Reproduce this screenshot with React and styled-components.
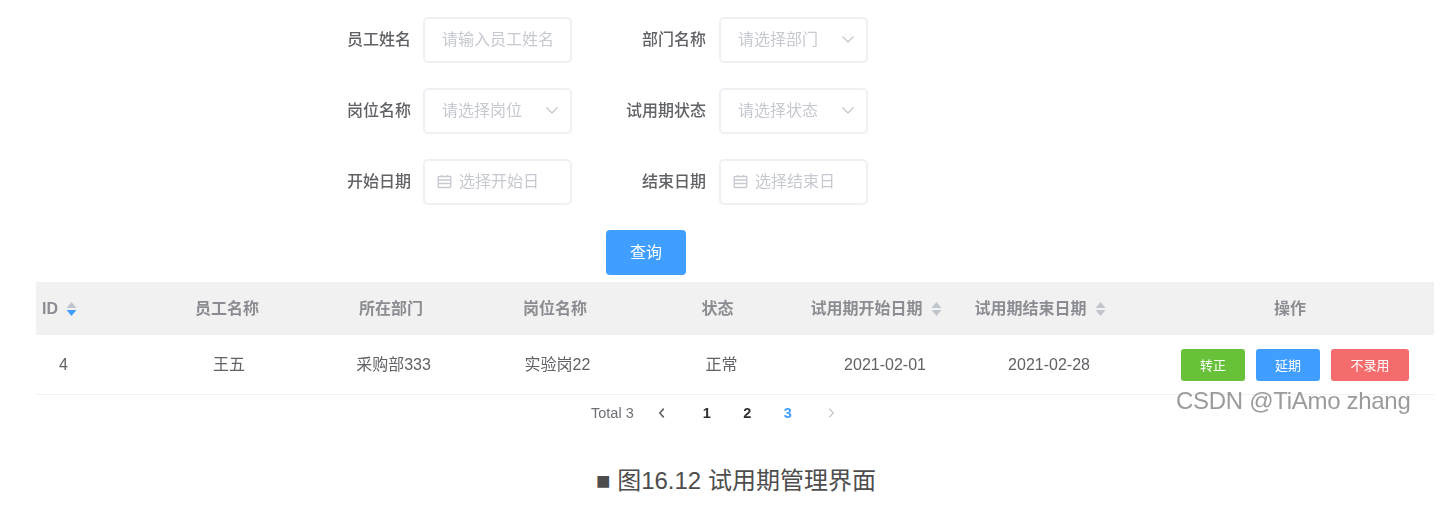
import React from "react";
import styled, { createGlobalStyle } from "styled-components";

const FONT = '"Liberation Sans", "Noto Sans CJK SC", sans-serif';

const Global = createGlobalStyle`
  html, body { margin: 0; padding: 0; background: #fff; }
  body { font-family: ${FONT}; }
`;
const Page = styled.div`
  position: relative;
  width: 1445px;
  height: 507px;
  overflow: hidden;
  background: #fff;
`;
const Soft = styled.div`
  filter: blur(0.6px);
`;
const Form = styled.div`
  display: grid;
  grid-template-columns: 423px 149px 147px 149px;
  grid-auto-rows: 46px;
  row-gap: 25px;
  padding-top: 17px;
`;
const Label = styled.div`
  display: flex;
  align-items: center;
  justify-content: flex-end;
  padding-right: ${(p) => (p.$second ? "13px" : "12px")};
  font-size: 16px;
  line-height: 22px;
  font-weight: 500;
  color: #606266;
`;
const Field = styled.div`
  box-sizing: border-box;
  display: flex;
  align-items: center;
  padding: 0 10px 0 ${(p) => (p.$date ? "12px" : "17px")};
  width: 149px;
  border: 2px solid #eef0f4;
  border-radius: 5px;
  font-size: 16px;
  line-height: 22px;
  color: #c6c9d0;
  gap: 7px;
  white-space: nowrap;
  svg {
    margin-bottom: 2px;
  }
`;
const FieldText = styled.span`
  flex: 1;
`;
const ButtonRow = styled.div`
  padding: 25px 0 0 606px;
`;
const QueryButton = styled.button`
  display: block;
  width: 80px;
  height: 45px;
  padding: 0 0 3px;
  border: none;
  border-radius: 4px;
  background: #409eff;
  color: #fff;
  font: 16px ${FONT};
`;
const Table = styled.div`
  margin: 7px 11px 0 36px;
`;
const Row = styled.div`
  display: grid;
  grid-template-columns: 109px 164px 164px 164px 163px 164px 164px 1fr;
  align-items: center;
  height: ${(p) => (p.$head ? "53px" : "60px")};
  box-sizing: border-box;
  background: ${(p) => (p.$head ? "#f1f1f1" : "#fff")};
  border-bottom: ${(p) => (p.$head ? "none" : "1px solid #f0f2f6")};
  color: ${(p) => (p.$head ? "#8b8d92" : "#606266")};
  font-size: 16px;
  font-weight: ${(p) => (p.$head ? 700 : 400)};
`;
const Cell = styled.div`
  display: flex;
  align-items: center;
  justify-content: ${(p) => (p.$left ? "flex-start" : "center")};
  padding-left: ${(p) => p.$pad || 0}px;
  padding-right: ${(p) => p.$padEnd || 0}px;
  gap: 8px;
  line-height: 22px;
  white-space: nowrap;
`;
const Actions = styled.div`
  display: flex;
  justify-content: flex-end;
  gap: 11px;
  padding-right: 25px;
`;
const ActionButton = styled.button`
  width: ${(p) => p.$w}px;
  height: 32px;
  padding: 0;
  border: none;
  border-radius: 3px;
  background: ${(p) => p.$bg};
  color: #fff;
  font: 13px ${FONT};
`;
const Pager = styled.div`
  display: flex;
  align-items: center;
  height: 36px;
  padding-left: 591px;
  font-size: 14.5px;
  color: #6e7075;
`;
const PagerTotal = styled.span`
  width: 44px;
  margin-right: 7px;
`;
const PagerButton = styled.span`
  display: flex;
  width: 40.5px;
  margin-left: ${(p) => p.$gap || 0}px;
  justify-content: center;
  align-items: center;
  font-weight: 700;
  color: ${(p) => p.$color || "#303133"};
`;
const Caption = styled.div`
  padding: 33px 0 0 596px;
  font-size: 24px;
  line-height: 34px;
  color: #4d4d4d;
  white-space: nowrap;
`;
const Watermark = styled.div`
  position: absolute;
  left: 1176px;
  top: 385px;
  font-size: 24px;
  line-height: 32px;
  letter-spacing: -0.3px;
  color: rgba(130, 130, 130, 0.8);
  white-space: nowrap;
`;

const Chevron = ({ dir = "down", size = 16, color = "#c6c9d0", sw = 1.4 }) => (
  <svg width={size} height={size} viewBox="0 0 16 16" fill="none">
    <path
      d={
        dir === "down"
          ? "M2.5 5.5 8 11 13.5 5.5"
          : dir === "left"
          ? "M10 3 5.5 8 10 13"
          : "M6 3 10.5 8 6 13"
      }
      stroke={color}
      strokeWidth={sw}
    />
  </svg>
);
const Calendar = () => (
  <svg width="15" height="15" viewBox="0 0 15 15" fill="none" stroke="#c6c9d0" strokeWidth="1.3">
    <rect x="1.2" y="2.5" width="12.6" height="11" rx="1" />
    <path d="M1.2 6h12.6M1.2 9.5h12.6M4.5 1v2M10.5 1v2" />
  </svg>
);
const Sort = ({ active }) => (
  <svg width="11" height="16" viewBox="0 0 11 16">
    <path d="M5.5 1 10.5 7H.5Z" fill="#c0c4cc" />
    <path d="M5.5 15 10.5 9H.5Z" fill={active ? "#409eff" : "#c0c4cc"} />
  </svg>
);

const fields = [
  ["员工姓名", "请输入员工姓名", "text", "部门名称", "请选择部门", "select"],
  ["岗位名称", "请选择岗位", "select", "试用期状态", "请选择状态", "select"],
  ["开始日期", "选择开始日", "date", "结束日期", "选择结束日", "date"],
];

const FormField = ({ text, kind }) => (
  <Field $date={kind === "date"}>
    {kind === "date" && <Calendar />}
    <FieldText>{text}</FieldText>
    {kind === "select" && <Chevron />}
  </Field>
);

export default function App() {
  return (
    <Page>
      <Global />
      <Soft>
        <Form>
          {fields.map((f) => (
            <React.Fragment key={f[0]}>
              <Label>{f[0]}</Label>
              <FormField text={f[1]} kind={f[2]} />
              <Label $second>{f[3]}</Label>
              <FormField text={f[4]} kind={f[5]} />
            </React.Fragment>
          ))}
        </Form>
        <ButtonRow>
          <QueryButton>查询</QueryButton>
        </ButtonRow>
        <Table>
          <Row $head>
            <Cell $left $pad={6}>
              ID <Sort active />
            </Cell>
            <Cell>员工名称</Cell>
            <Cell>所在部门</Cell>
            <Cell>岗位名称</Cell>
            <Cell $padEnd={2}>状态</Cell>
            <Cell $padEnd={12}>
              试用期开始日期 <Sort />
            </Cell>
            <Cell $padEnd={12}>
              试用期结束日期 <Sort />
            </Cell>
            <Cell $pad={18}>操作</Cell>
          </Row>
          <Row>
            <Cell $left $pad={23}>4</Cell>
            <Cell $pad={4}>王五</Cell>
            <Cell $pad={5}>采购部333</Cell>
            <Cell $pad={5}>实验岗22</Cell>
            <Cell $pad={6}>正常</Cell>
            <Cell $pad={6}>2021-02-01</Cell>
            <Cell $pad={6}>2021-02-28</Cell>
            <Actions>
              <ActionButton $w={64} $bg="#67c23a">转正</ActionButton>
              <ActionButton $w={64} $bg="#409eff">延期</ActionButton>
              <ActionButton $w={78} $bg="#f56c6c">不录用</ActionButton>
            </Actions>
          </Row>
        </Table>
        <Pager>
          <PagerTotal>Total 3</PagerTotal>
          <PagerButton>
            <Chevron dir="left" size={14} color="#606266" sw={1.8} />
          </PagerButton>
          <PagerButton $gap={4}>1</PagerButton>
          <PagerButton>2</PagerButton>
          <PagerButton $color="#409eff">3</PagerButton>
          <PagerButton $gap={3}>
            <Chevron dir="right" size={14} color="#c0c4cc" sw={1.5} />
          </PagerButton>
        </Pager>
        <Watermark>CSDN @TiAmo zhang</Watermark>
      </Soft>
      <Caption>■ 图16.12 试用期管理界面</Caption>
    </Page>
  );
}
